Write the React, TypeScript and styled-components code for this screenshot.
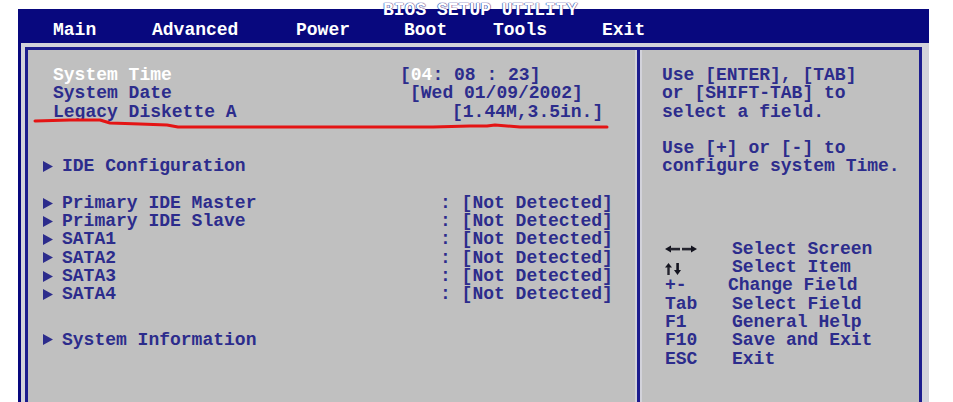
import React from "react";
import styled, { createGlobalStyle } from "styled-components";

const Global = createGlobalStyle`
  html, body { margin: 0; padding: 0; background: #ffffff; }
  body { font-family: "Liberation Mono", "Courier New", monospace; font-weight: bold; font-size: 18px; }
  #root { width: 953px; height: 402px; overflow: hidden; }
`;

const NAVY = "#08087e";
const TEXT = "#2c2c8c";
const PANEL = "#c0c0c0";
const LIGHT = "#d2d2da";
const BORDER = "#1c1c8e";

const Page = styled.div`
  position: relative;
  width: 953px;
  height: 402px;
  overflow: hidden;
`;

const Frame = styled.div`
  margin-left: 18px;
  width: 911px;
  display: flex;
  flex-direction: column;
`;

const Header = styled.header`
  height: 43px;
  background: linear-gradient(to bottom, #ffffff 0, #ffffff 9px, ${NAVY} 9px);
  color: #ffffff;
  display: flex;
  flex-direction: column;
`;

const Title = styled.div`
  margin-top: 2px;
  height: 16px;
  line-height: 16px;
  padding-left: 365px;
  white-space: pre;
  text-shadow: 0 0 1px ${NAVY}, 0 0 1px ${NAVY};
`;

const MenuBar = styled.nav`
  margin-top: 3px;
  height: 18px;
  line-height: 18px;
  display: flex;
  padding-left: 35px;
`;

const MenuItem = styled.span<{ $w: number }>`
  width: ${(p) => p.$w}px;
  white-space: pre;
`;

const Body = styled.div`
  background: ${LIGHT};
  border-left: 3px solid ${NAVY};
  padding: 4px 7px 0 4px;
`;

const Inner = styled.div`
  border: 3px solid ${BORDER};
  border-bottom: none;
  height: 360px;
  display: flex;
`;

const LeftPanel = styled.section`
  width: 607px;
  background: ${PANEL};
  padding-top: 16px;
  color: ${TEXT};
`;

const Divider = styled.div`
  width: 3px;
  background: ${BORDER};
  border-left: 2px solid ${LIGHT};
  border-right: 2px solid ${LIGHT};
`;

const RightPanel = styled.aside`
  flex: 1;
  background: ${PANEL};
  padding: 16px 0 0 20px;
  color: ${TEXT};
`;

const Row = styled.div`
  display: grid;
  grid-template-columns: 356px 1fr;
  padding-left: 16px;
  height: 18.3px;
  line-height: 18.3px;
  white-space: pre;
`;

const Label = styled.div<{ $plain?: boolean; $selected?: boolean }>`
  display: flex;
  align-items: center;
  padding-left: ${(p) => (p.$plain ? 9 : 0)}px;
  color: ${(p) => (p.$selected ? "#ffffff" : TEXT)};
`;

const ArrowBox = styled.span`
  width: 18px;
  display: inline-flex;
  align-items: center;
  margin-left: -1px;
  margin-right: 1px;
`;

const Value = styled.div<{ $indent: number }>`
  padding-left: ${(p) => p.$indent}px;
`;

const Hi = styled.span`
  color: #ffffff;
`;

const Spacer = styled.div<{ $h: number }>`
  height: ${(p) => p.$h}px;
`;

const HelpLine = styled.div`
  height: 18.3px;
  line-height: 18.3px;
  white-space: pre;
`;

const Legend = styled.div`
  display: flex;
  flex-direction: column;
`;

const LegendRow = styled.div`
  display: grid;
  grid-template-columns: 70px 1fr;
  height: 18.3px;
  line-height: 18.3px;
  white-space: pre;
`;

const Key = styled.div`
  padding-left: 3px;
  display: flex;
  align-items: center;
`;

const Desc = styled.div<{ $pull?: number }>`
  margin-left: ${(p) => -(p.$pull ?? 0)}px;
`;

const Overlay = styled.svg`
  position: absolute;
  left: 0;
  top: 0;
  pointer-events: none;
`;

const Tri = () => (
  <svg width="10" height="11" viewBox="0 0 10 11">
    <polygon points="0,0 10,5.5 0,11" fill={TEXT} />
  </svg>
);

const LeftRight = () => (
  <svg width="33" height="8" viewBox="0 0 33 8" style={{ marginTop: 1 }}>
    <polygon points="0,4 6,0.5 6,7.5" fill="#14141f" />
    <rect x="5" y="2.8" width="10" height="2.6" fill="#24242e" />
    <rect x="17" y="2.8" width="10" height="2.6" fill="#24242e" />
    <polygon points="26,0.5 32,4 26,7.5" fill="#14141f" />
  </svg>
);

const UpDown = () => (
  <svg width="17" height="12" viewBox="0 0 17 12" style={{ marginTop: 4 }}>
    <polygon points="3.5,0 0,4.5 7,4.5" fill="#14141f" />
    <rect x="2.3" y="4" width="2.4" height="8" fill="#24242e" />
    <rect x="11.3" y="0" width="2.6" height="7.5" fill="#14141f" />
    <polygon points="9,7 16,7 12.5,12" fill="#14141f" />
  </svg>
);

type Item = { label: string };

const drives: Item[] = [
  { label: "Primary IDE Master" },
  { label: "Primary IDE Slave" },
  { label: "SATA1" },
  { label: "SATA2" },
  { label: "SATA3" },
  { label: "SATA4" },
];

const menu: [string, number][] = [
  ["Main", 99],
  ["Advanced", 144],
  ["Power", 108],
  ["Boot", 89],
  ["Tools", 109],
  ["Exit", 60],
];

const legend: { key: React.ReactNode; desc: string; pull?: number }[] = [
  { key: <LeftRight />, desc: "Select Screen" },
  { key: <UpDown />, desc: "Select Item" },
  { key: "+-", desc: "Change Field", pull: 4 },
  { key: "Tab", desc: "Select Field" },
  { key: "F1", desc: "General Help" },
  { key: "F10", desc: "Save and Exit" },
  { key: "ESC", desc: "Exit" },
];

export default function App() {
  return (
    <Page>
      <Global />
      <Frame>
        <Header>
          <Title>BIOS SETUP UTILITY</Title>
          <MenuBar>
            {menu.map(([m, w]) => (
              <MenuItem key={m} $w={w}>
                {m}
              </MenuItem>
            ))}
          </MenuBar>
        </Header>
        <Body>
          <Inner>
            <LeftPanel>
              <Row>
                <Label $plain $selected>System Time</Label>
                <Value $indent={0}>
                  [<Hi>04</Hi>: 08 : 23]
                </Value>
              </Row>
              <Row>
                <Label $plain>System Date</Label>
                <Value $indent={10}>[Wed 01/09/2002]</Value>
              </Row>
              <Row>
                <Label $plain>Legacy Diskette A</Label>
                <Value $indent={52}>[1.44M,3.5in.]</Value>
              </Row>
              <Spacer $h={36} />
              <Row>
                <Label>
                  <ArrowBox>
                    <Tri />
                  </ArrowBox>
                  IDE Configuration
                </Label>
              </Row>
              <Spacer $h={18.7} />
              {drives.map((d) => (
                <Row key={d.label}>
                  <Label>
                    <ArrowBox>
                      <Tri />
                    </ArrowBox>
                    {d.label}
                  </Label>
                  <Value $indent={40}>: [Not Detected]</Value>
                </Row>
              ))}
              <Spacer $h={27} />
              <Row>
                <Label>
                  <ArrowBox>
                    <Tri />
                  </ArrowBox>
                  System Information
                </Label>
              </Row>
            </LeftPanel>
            <Divider />
            <RightPanel>
              <HelpLine>Use [ENTER], [TAB]</HelpLine>
              <HelpLine>or [SHIFT-TAB] to</HelpLine>
              <HelpLine>select a field.</HelpLine>
              <Spacer $h={18.3} />
              <HelpLine>Use [+] or [-] to</HelpLine>
              <HelpLine>configure system Time.</HelpLine>
              <Spacer $h={64} />
              <Legend>
                {legend.map((l, i) => (
                  <LegendRow key={i}>
                    <Key>{l.key}</Key>
                    <Desc $pull={l.pull}>{l.desc}</Desc>
                  </LegendRow>
                ))}
              </Legend>
            </RightPanel>
          </Inner>
        </Body>
      </Frame>
      <Overlay width="953" height="402" viewBox="0 0 953 402">
        <polyline
          points="35,121 70,120 100,120 110,123 140,124 167,125 178,127 300,127 433,127 470,126 487,126 495,125 520,127 607,127"
          fill="none"
          stroke="#e41414"
          strokeWidth="3"
          strokeLinecap="round"
          strokeLinejoin="round"
        />
      </Overlay>
    </Page>
  );
}
